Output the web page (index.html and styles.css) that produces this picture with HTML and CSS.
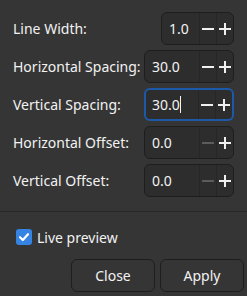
FILE: index.html
```html
<!DOCTYPE html>
<html>
<head>
<meta charset="utf-8">
<link rel="stylesheet" href="styles.css">
</head>
<body>
<div class="dialog">
  <div class="grid">
    <div class="row">
      <span class="label">Line Width:</span>
      <div class="spin narrow">
        <span class="value">1.0</span>
        <span class="btn"><span class="minus"></span></span>
        <span class="btn"><span class="plus"></span></span>
      </div>
    </div>
    <div class="row">
      <span class="label">Horizontal Spacing:</span>
      <div class="spin">
        <span class="value">30.0</span>
        <span class="btn"><span class="minus"></span></span>
        <span class="btn"><span class="plus"></span></span>
      </div>
    </div>
    <div class="row">
      <span class="label">Vertical Spacing:</span>
      <div class="spin focused">
        <span class="value">30.0<span class="caret"></span></span>
        <span class="btn"><span class="minus"></span></span>
        <span class="btn"><span class="plus"></span></span>
      </div>
    </div>
    <div class="row">
      <span class="label">Horizontal Offset:</span>
      <div class="spin">
        <span class="value">0.0</span>
        <span class="btn"><span class="minus off"></span></span>
        <span class="btn"><span class="plus"></span></span>
      </div>
    </div>
    <div class="row">
      <span class="label">Vertical Offset:</span>
      <div class="spin">
        <span class="value">0.0</span>
        <span class="btn"><span class="minus off"></span></span>
        <span class="btn"><span class="plus"></span></span>
      </div>
    </div>
  </div>
  <div class="sep"></div>
  <label class="check">
    <span class="box">
      <svg width="16" height="16" viewBox="0 0 16 16"><path d="M4 8.2 L6.8 11 L12 5.2" fill="none" stroke="#fff" stroke-width="2.2" stroke-linecap="round" stroke-linejoin="round"/></svg>
    </span>
    <span class="check-text">Live preview</span>
  </label>
  <div class="buttons">
    <button class="button">Close</button>
    <button class="button">Apply</button>
  </div>
</div>
</body>
</html>
```
FILE: styles.css
```css
html, body {
  margin: 0;
  padding: 0;
  background: #353535;
}
body {
  width: 247px;
  height: 296px;
  overflow: hidden;
  font-family: "Noto Sans", "Open Sans", sans-serif;
  font-size: 14px;
  color: #f2f2f2;
}
.dialog {
  display: flex;
  flex-direction: column;
  padding: 12px 0 0 0;
}
.grid {
  display: flex;
  flex-direction: column;
  gap: 5px;
  padding: 0 13px 0 13px;
}
.row {
  display: flex;
  align-items: center;
  justify-content: space-between;
  height: 33px;
}
.label {
  white-space: nowrap;
}
.spin {
  box-sizing: border-box;
  width: 90px;
  height: 33px;
  display: flex;
  align-items: stretch;
  background: #2d2d2d;
  border: 1px solid #1e1e1e;
  border-radius: 6px;
}
.spin.narrow {
  width: 73px;
}
.spin.focused {
  border: 2px solid #1c5aa9;
}
.value {
  flex: 1;
  display: flex;
  align-items: center;
  padding-left: 7px;
  position: relative;
}
.spin.focused .value {
  padding-left: 6px;
}
.caret {
  display: inline-block;
  width: 1px;
  height: 17px;
  background: #f2f2f2;
  margin-left: 0px;
}
.btn {
  width: 16px;
  border-left: 1px solid #262626;
  display: flex;
  align-items: center;
  justify-content: center;
  position: relative;
}
.minus {
  width: 12px;
  height: 2px;
  background: #f0f0f0;
}
.minus.off {
  background: #5c5c5c;
}
.plus {
  width: 12px;
  height: 12px;
  position: relative;
}
.plus::before, .plus::after {
  content: "";
  position: absolute;
  background: #f0f0f0;
}
.plus::before {
  left: 0;
  top: 5px;
  width: 12px;
  height: 2px;
}
.plus::after {
  left: 5px;
  top: 0;
  width: 2px;
  height: 12px;
}
.sep {
  height: 1px;
  background: #282828;
  margin-top: 14px;
}
.check {
  display: flex;
  align-items: center;
  gap: 5px;
  padding-left: 16px;
  margin-top: 17px;
  height: 16px;
}
.box {
  width: 16px;
  height: 16px;
  border-radius: 3px;
  background: #3584e4;
  display: flex;
}
.buttons {
  display: flex;
  justify-content: flex-end;
  gap: 5px;
  padding-right: 3px;
  margin-top: 14px;
}
.button {
  box-sizing: border-box;
  width: 84px;
  height: 33px;
  background: #353535;
  border: 1px solid #1e1e1e;
  border-radius: 6px;
  color: #f2f2f2;
  font-family: inherit;
  font-size: 14px;
  padding: 0;
}
```
